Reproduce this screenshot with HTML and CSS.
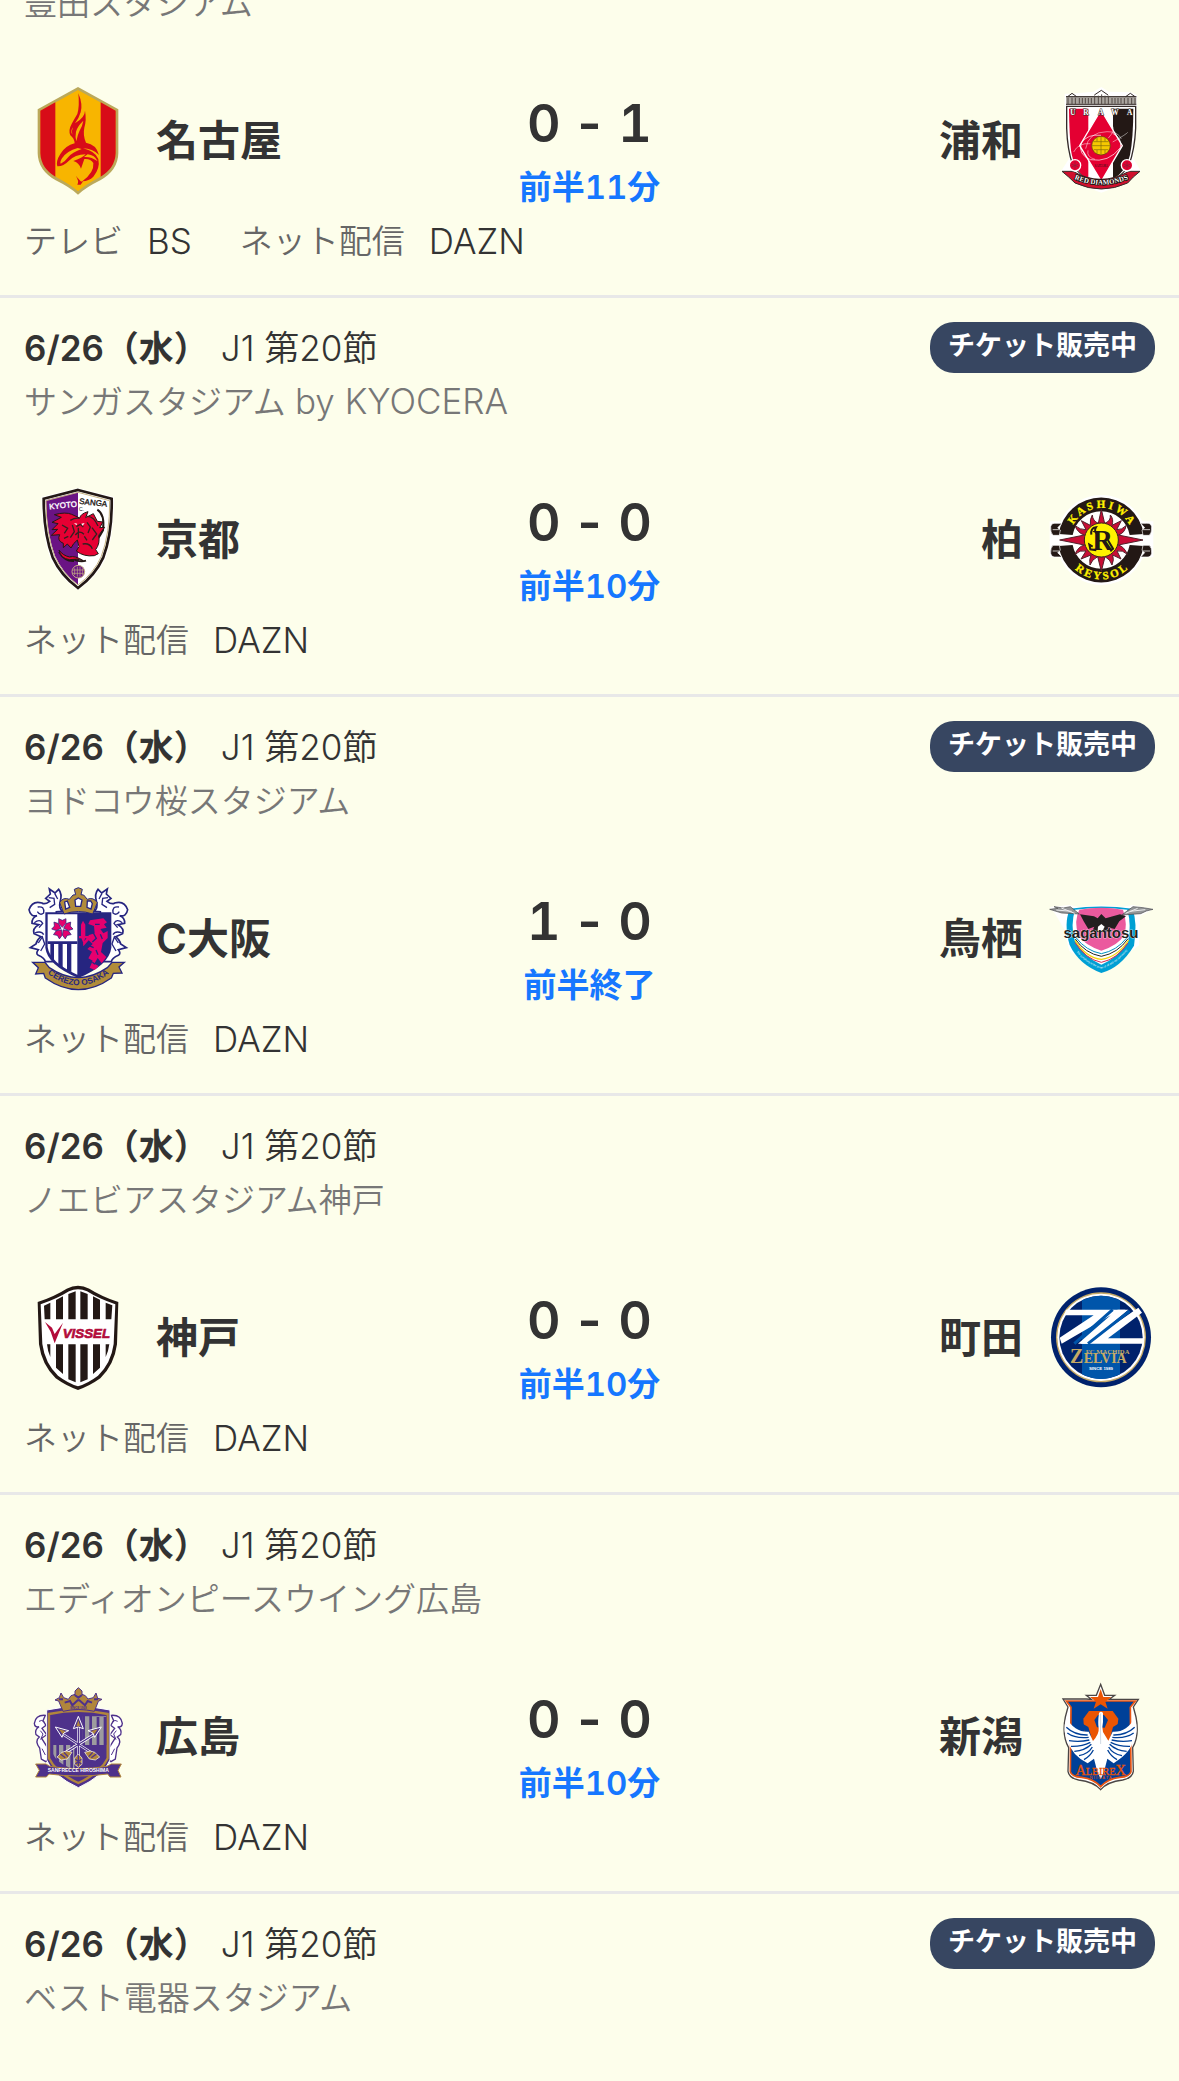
FILE: index.html
```html
<!DOCTYPE html>
<html lang="ja">
<head>
<meta charset="utf-8">
<meta name="viewport" content="width=device-width, initial-scale=1">
<title>J1 第20節</title>
<link rel="stylesheet" href="styles.css">
</head>
<body>
<main class="matches">

<article class="match match--scrolled">
  <p class="venue">豊田スタジアム</p>
  <div class="board">
    <svg class="crest" viewBox="27 33 324 324" aria-hidden="true">
      <path d="M189 36L310 103V235Q309 286 256 316Q215 336 189 359Q163 336 122 316Q69 286 68 235V103Z" fill="#bba95b"/>
      <path d="M189 45L302 107V235Q300 280 251 308Q211 329 189 349Q167 329 127 308Q78 280 76 235V107Z" fill="#f8b500"/>
      <path d="M121 82V305Q78 280 76 235V107ZM257 82V305Q300 280 302 235V107Z" fill="#d80c18"/>
      <path d="M190 55Q204 88 197 112Q191 132 180 145Q210 127 210 107Q215 135 208 158Q203 180 213 203Q244 208 252 240Q232 220 204 220Q240 228 250 252Q256 280 235 305Q222 318 202 319Q238 292 235 264Q226 250 208 252L198 281Q192 263 175 258Q205 247 212 238Q180 238 160 259Q145 275 127 274Q122 259 136 237Q151 212 179 205Q178 190 166 181Q159 166 171 145Q178 132 187 117Q194 93 190 55ZM182 302L197 319Q203 321 207 315L197 329H187Q193 317 182 302Z" fill="#d80c18"/>
      <path d="M205 137Q187 154 183 170Q180 184 184 199Q188 179 193 169Q202 155 205 137ZM188 219Q155 228 141 250Q134 262 137 266Q150 260 158 248Q172 231 200 222ZM218 238Q239 240 248 259Q228 244 207 246ZM174 157Q165 169 172 179Q169 166 174 157Z" fill="#f8b500"/>
    </svg>
    <p class="team">名古屋</p>
    <div class="result"><p class="score"><span>0</span><span>-</span><span>1</span></p><p class="status">前半11分</p></div>
    <p class="team team--away">浦和</p>
    <svg class="crest" viewBox="21 33 324 324" aria-hidden="true">
      <path d="M74 56H92L160 50L184 36L207 50L274 52L291 60V92L288 175L280 250L302 287L260 325L184 353L109 325L64 287L88 250L80 190L74 92Z" fill="#fff"/>
      <path d="M78 63H289V88H78Z" fill="#aaa59f"/>
      <path d="M78 65H289M78 88H289M163 60L184 46L204 60M83 65L96 55L110 65M257 65L271 55L285 65" fill="none" stroke="#342b28" stroke-width="3"/>
      <path d="M84 68V88M96 68V88M106 68V88M118 69V86M127 69V86M136 69V86M145 69V86M154 69V86M164 62V88M175 62V88M185 58V88M195 62V88M205 62V88M216 69V86M225 69V86M234 69V86M243 69V86M253 69V88M264 69V88M275 69V88M285 69V88" stroke="#514844" stroke-width="3"/>
      <path d="M80 94H287V160Q284 224 267 270Q247 306 184 340Q121 306 98 270Q82 224 80 160Z" fill="#fff" stroke="#342b28" stroke-width="4"/>
      <path d="M87 101H145V316Q102 288 93 226Q88 180 87 101Z" fill="#e40032"/>
      <path d="M219 101H280Q280 187 270 240Q260 289 219 312Z" fill="#231815"/>
      <path d="M183 105L247 212L184 319L119 212Z" fill="#e40032" stroke="#fff" stroke-width="4"/>
      <g fill="none" stroke="#fff" stroke-width="2"><path d="M183 181Q143 176 124 204Q113 238 151 254Q206 264 241 218Q247 188 218 175"/><path d="M205 189Q227 165 218 154M151 206Q115 203 101 231M144 226Q139 246 165 253M218 201Q262 176 263 172M137 221Q145 171 201 170Q234 169 244 192" opacity=".7"/></g>
      <circle cx="183" cy="212" r="28" fill="#f5c900" stroke="#58430c" stroke-width="2"/>
      <path d="M160 200H206M156 212H210M161 224H205M171 187V199M183 185V239M195 187V199M171 225V237M195 225V237" fill="none" stroke="#7d670b" stroke-width="2"/>
      <g class="crest-serif" font-size="22" font-weight="700" fill="#fff" stroke="#342b28" stroke-width="3" paint-order="stroke"><text x="91" y="119">U</text><text x="130" y="119">R</text><text x="175" y="119">A</text><text x="214" y="119">W</text><text x="261" y="119">A</text></g>
      <text class="crest-serif" x="184" y="276" font-size="9" fill="#231815" text-anchor="middle">SAITAMA</text>
      <path d="M66 289H99Q182 337 267 289H300L280 306L263 324Q184 360 105 324L86 306Z" fill="#d0102d" stroke="#342b28" stroke-width="3"/>
      <circle cx="105" cy="271" r="17" fill="#e40032" stroke="#fff" stroke-width="4"/><circle cx="261" cy="271" r="17" fill="#e40032" stroke="#fff" stroke-width="4"/>
      <path d="M105 259V282M94 267L116 276M94 276L116 267M261 259V282M250 267L272 276M250 276L272 267" stroke="#84233b" stroke-width="2"/>
      <path id="red-ribbon" d="M103 312Q184 346 265 312" fill="none"/>
      <text class="crest-serif" font-size="21" font-weight="700" fill="#fff" stroke="#231815" stroke-width="5" paint-order="stroke" text-anchor="middle"><textPath href="#red-ribbon" startOffset="50%">RED DIAMONDS</textPath></text>
    </svg>
  </div>
  <dl class="media"><div><dt>テレビ</dt><dd>BS</dd></div><div><dt>ネット配信</dt><dd>DAZN</dd></div></dl>
</article>

<article class="match">
  <header class="info"><p class="date"><b>6/26（水）</b><span>J1 第20節</span></p><span class="ticket">チケット販売中</span></header>
  <p class="venue">サンガスタジアム <span class="venue-latin">by KYOCERA</span></p>
  <div class="board">
    <svg class="crest" viewBox="27 30 324 324" aria-hidden="true">
      <path d="M189 39L297 66Q298 179 271 253Q244 309 189 346Q134 309 107 253Q80 179 79 66Z" fill="#fff"/>
      <path d="M189 45L290 71Q292 174 265 247Q241 300 189 339Q137 300 113 247Q86 174 86 71Z" fill="#fff" stroke="#231815" stroke-width="8"/>
      <path d="M189 52V330Q143 294 120 243Q95 175 92 76Z" fill="#6a1384"/>
      <path d="M189 52L284 77Q285 174 259 244Q237 294 189 330Q141 294 119 244Q93 174 93 77Z" fill="none" stroke="#c6b283" stroke-width="3"/>
      <path d="M247 104Q270 118 264 166Q247 198 237 202M177 258Q150 260 132 231M165 246Q191 264 213 257" fill="none" stroke="#231815" stroke-width="6"/>
      <path d="M194 129L170 118Q152 110 118 119L139 127L111 142L129 146L111 164L128 163L109 181L134 179Q125 197 145 205L145 218L157 207L168 219L176 206L187 195L192 215L184 228Q206 246 238 242L250 236L242 224Q256 205 251 181L269 157L254 158L264 141L247 139L235 116L212 128L219 110Q197 116 194 129ZM132 225Q137 251 164 254Q187 249 205 257Q180 241 164 246Q144 242 132 225Z" fill="#e60033" stroke="#231815" stroke-width="3"/>
      <path d="M194 130Q179 128 166 136M215 124Q236 122 249 153M141 150L158 160L148 175M216 142L226 156L219 174M184 155L196 148L205 156M181 180Q193 164 207 178M231 158L245 177L232 195M147 190L160 184M203 207Q224 203 232 221M172 150L178 170L166 188M190 158V190M208 184L216 196" fill="none" stroke="#342020" stroke-width="4"/>
      <path d="M177 144L187 146L184 151ZM209 144L199 146L203 152Z" fill="#fff"/>
      <circle cx="190" cy="290" r="19" fill="#6a1384" stroke="#c6b283" stroke-width="3"/><path d="M179 280V300M187 275V305M195 275V305M203 280V300M174 285H206M174 295H206" stroke="#c6b283" stroke-width="2"/>
      <g class="crest-sans" font-size="24" stroke-width="1"><text x="102" y="99" fill="#fff" stroke="#fff" transform="rotate(-6 145 90)">KYOTO</text><text x="192" y="91" fill="#231815" stroke="#231815" transform="rotate(6 234 90)">SANGA</text></g><text class="crest-sans" x="192" y="107" font-size="15" fill="#231815">C.</text>
    </svg>
    <p class="team">京都</p>
    <div class="result"><p class="score"><span>0</span><span>-</span><span>0</span></p><p class="status">前半10分</p></div>
    <p class="team team--away">柏</p>
    <svg class="crest" viewBox="21 30 324 324" aria-hidden="true">
      <circle cx="184" cy="195" r="135" fill="#fff"/><path d="M29 139H340V247H29Z" fill="#fff"/>
      <path d="M56 177A129 129 0 0 1 311 177L269 180A87 87 0 0 0 98 180ZM56 213A129 129 0 0 0 311 213L269 210A87 87 0 0 1 98 210Z" fill="#231815"/>
      <path d="M58 181H39Q31 174 32 155Q35 143 48 145H66L53 158L61 165ZM309 181H328Q336 174 335 155Q332 143 319 145H302L314 158L306 165ZM58 211H39Q31 218 32 235Q35 248 48 246H66L53 233L61 226ZM309 211H328Q336 218 335 235Q332 248 319 246H302L314 233L306 226Z" fill="#231815" stroke="#fff" stroke-width="2"/>
      <path d="M38 164H58M309 164H330M38 228H58M309 228H330" stroke="#c4c0bc" stroke-width="3"/>
      <path d="M184 103L194 145Q213 138 211 120Q222 132 216 151L244 137L230 164Q246 165 258 152Q255 174 235 180L309 195L235 210Q253 215 262 238Q248 224 231 228L243 252L218 240Q223 254 216 270Q211 253 195 245L184 289L173 245Q156 253 150 270Q147 253 153 240L123 252L138 228Q120 224 105 238Q114 215 133 210L59 195L133 180Q113 174 105 152Q121 165 138 164L124 137L151 151Q149 132 157 120Q158 138 175 145Z" fill="#c80d35" stroke="#51202a" stroke-width="3"/>
      <circle cx="184" cy="195" r="51" fill="#fff100" stroke="#38201d" stroke-width="3"/>
      <text class="crest-serif" x="188" y="225" font-size="86" font-weight="700" fill="#231815" text-anchor="middle">R</text>
      <path d="M154 179Q151 159 168 157Q160 170 174 178M158 215L148 209L151 223L169 226M204 196L219 221L211 229" fill="none" stroke="#231815" stroke-width="6"/>
      <path id="kashiwa" d="M88 195A96 96 0 0 1 280 195" fill="none"/><path id="reysol" d="M66 195A118 118 0 0 0 302 195" fill="none"/>
      <g class="crest-serif" font-size="33" font-weight="700" fill="#fff100" stroke="#fff100" stroke-width="1" text-anchor="middle"><text><textPath href="#kashiwa" startOffset="50%">K A S H I W A</textPath></text><text><textPath href="#reysol" startOffset="50%">R E Y S O L</textPath></text></g>
    </svg>
  </div>
  <dl class="media"><div><dt>ネット配信</dt><dd>DAZN</dd></div></dl>
</article>

<article class="match">
  <header class="info"><p class="date"><b>6/26（水）</b><span>J1 第20節</span></p><span class="ticket">チケット販売中</span></header>
  <p class="venue">ヨドコウ桜スタジアム</p>
  <div class="board">
    <svg class="crest" viewBox="27 27 324 324" aria-hidden="true">
      <g id="cerezo-wing"><path d="M142 109Q131 98 135 82Q143 57 131 43L120 54L103 42L106 57L92 70L104 79Q89 90 81 84Q52 75 42 104Q46 126 66 122Q50 128 51 145L71 149Q51 161 57 176L78 185Q66 194 63 207L46 218L70 224Q61 235 70 241Q89 249 91 260L124 260V110Z" fill="#fff" stroke="#262580" stroke-width="5"/><path d="M68 96Q89 92 86 114Q76 123 67 110M101 68L117 70L119 88L104 98M58 143Q75 130 83 145L72 158M59 174Q79 166 86 179M70 204L82 186L89 207L77 228M119 55L128 72" fill="none" stroke="#262580" stroke-width="4"/></g>
      <use href="#cerezo-wing" transform="translate(380 0) scale(-1 1)"/>
      <path d="M91 112H289V218Q283 270 190 309Q97 270 91 218Z" fill="#262580"/>
      <path d="M98 118H187V299Q104 262 98 216Z" fill="#fff"/>
      <path d="M98 199H187V207H98ZM106 205H117V259L106 247ZM130 205H143V281L130 272ZM156 205H169V292L156 286Z" fill="#262580"/>
      <g fill="#e5006e" stroke="#262580" stroke-width="2"><path id="cerezo-petal" d="M142 157L131 145L131 131L142 136L153 131L153 145Z"/><use href="#cerezo-petal" transform="rotate(72 142 161)"/><use href="#cerezo-petal" transform="rotate(144 142 161)"/><use href="#cerezo-petal" transform="rotate(216 142 161)"/><use href="#cerezo-petal" transform="rotate(288 142 161)"/></g>
      <path d="M204 137L211 149V183H219V190H210L206 206L199 190H192V183H198V149ZM225 136L265 130L276 142L267 148L275 158L256 162L265 175L278 168V189L263 204L258 231L274 246L260 265L248 249L238 266L251 273L239 285L224 278L233 257L220 250L231 230L217 222L233 207L221 196L205 214L204 204L222 180L239 175L237 153L220 147Z" fill="#e5006e"/>
      <path d="M235 174L244 190L232 201M243 225L249 239M240 148H254M256 178L262 192M222 212L236 218M232 262L240 268" fill="none" stroke="#262580" stroke-width="4"/>
      <path d="M147 117L134 83Q144 65 163 73L174 60L182 59L178 43L190 38L202 43L198 59L206 60L217 73Q235 65 247 83L233 117Q190 102 147 117Z" fill="#b18c3a" stroke="#262580" stroke-width="3"/>
      <path d="M149 81L157 78L164 97L152 102ZM180 75L190 69L201 75L197 94L182 94ZM217 78L227 78L232 86L228 102L216 97Z" fill="#fff" stroke="#262580" stroke-width="4"/>
      <path d="M53 262H90L103 278Q190 338 277 278L291 262H328L312 276L321 294L295 295L289 309Q190 379 91 309L86 295L62 297L70 278Z" fill="#b18c3a" stroke="#262580" stroke-width="4"/>
      <path id="cerezo-ribbon" d="M94 292Q190 370 286 292" fill="none"/><text class="crest-sans" font-size="25" font-weight="700" fill="#262580" text-anchor="middle"><textPath href="#cerezo-ribbon" startOffset="50%">CEREZO OSAKA</textPath></text>
    </svg>
    <p class="team">C大阪</p>
    <div class="result"><p class="score"><span>1</span><span>-</span><span>0</span></p><p class="status">前半終了</p></div>
    <p class="team team--away">鳥栖</p>
    <svg class="crest" viewBox="21 27 324 324" aria-hidden="true">
      <path d="M29 96L89 90L116 96Q184 86 247 96L277 90L341 102L300 123L297 211L184 295L88 228L71 160L45 116Z" fill="#fff"/>
      <path d="M90 101Q184 88 277 101Q293 140 282 212Q242 278 184 294Q117 269 89 210Q70 145 90 101Z" fill="#009fd4"/>
      <path d="M105 104Q184 94 262 104Q275 150 264 201Q229 251 184 269Q133 248 104 196Q91 150 105 104Z" fill="#fff"/>
      <path d="M118 104Q184 92 249 104Q264 149 252 181Q235 211 184 227Q134 211 115 181Q101 137 118 104Z" fill="#eb5a9e"/>
      <path d="M109 189Q138 227 184 236Q230 227 260 189" fill="none" stroke="#0092bf" stroke-width="3"/><path d="M106 192Q135 235 184 244Q233 235 264 191" fill="none" stroke="#252523" stroke-width="3"/><path d="M105 196Q138 248 184 253Q232 247 266 195" fill="none" stroke="#f8d40b" stroke-width="4"/><path d="M105 203Q138 253 184 262Q232 252 264 204" fill="none" stroke="#d92953" stroke-width="3"/>
      <path d="M120 118L162 124L173 130L184 117L197 130L240 118L258 124L238 139L224 162L203 157L213 171H155L163 155L145 162L131 139Z" fill="#231f20"/>
      <path d="M29 103L54 100L42 95L70 99L91 95L118 117L65 114ZM339 103L309 98L279 95L245 120L302 116L319 108Z" fill="#949698" stroke="#4a4a4c" stroke-width="2"/><path d="M49 105L95 109M64 99L104 115M316 104L270 109M293 100L257 115" stroke="#ececed" stroke-width="3"/>
      <path d="M174 155L184 147L194 155L187 168H173Z" fill="#fff"/>
      <text class="crest-sans" x="183" y="188" font-size="45" font-weight="700" fill="#231f20" stroke="#fff" stroke-width="2" paint-order="stroke" text-anchor="middle">sagantosu</text>
      <path id="tosu-curve" d="M93 207Q125 262 184 281Q242 262 279 203" fill="none"/><text class="crest-sans" font-size="8" fill="#fff" text-anchor="middle"><textPath href="#tosu-curve" startOffset="50%">The symphony is the power of all and our community</textPath></text>
    </svg>
  </div>
  <dl class="media"><div><dt>ネット配信</dt><dd>DAZN</dd></div></dl>
</article>

<article class="match">
  <header class="info"><p class="date"><b>6/26（水）</b><span>J1 第20節</span></p></header>
  <p class="venue">ノエビアスタジアム神戸</p>
  <div class="board">
    <svg class="crest" viewBox="27 24 324 324" aria-hidden="true">
      <path d="M68 81Q119 64 155 41Q189 24 223 41Q259 64 310 81L306 208Q298 269 256 310Q224 333 189 345Q154 333 122 310Q80 269 72 208Z" fill="#231815"/>
      <path d="M77 88Q127 71 162 49Q189 37 216 49Q251 71 301 88L296 207Q288 265 249 302Q220 324 189 334Q158 324 129 302Q90 265 82 207Z" fill="#fff"/>
      <path d="M87 92L106 83V133H89ZM123 75L144 64V133H123ZM160 57L182 49V133H160ZM196 49L218 57V133H196ZM234 64L255 74V133H234ZM272 83L292 91L289 133H272ZM96 208H106V246Q98 229 96 208ZM123 208H144V297L123 278ZM160 208H182V322L160 313ZM196 208H218V313L196 322ZM234 208H255V278L234 297ZM272 208H283Q280 231 272 246Z" fill="#231815"/>
      <path d="M90 141L111 158L119 177L144 143L119 205L107 170Z" fill="#b30c3b"/>
      <text class="crest-sans" x="143" y="189" font-size="40" font-weight="700" font-style="italic" fill="#b30c3b" stroke="#b30c3b" stroke-width="2">VISSEL</text>
    </svg>
    <p class="team">神戸</p>
    <div class="result"><p class="score"><span>0</span><span>-</span><span>0</span></p><p class="status">前半10分</p></div>
    <p class="team team--away">町田</p>
    <svg class="crest" viewBox="21 24 324 324" aria-hidden="true">
      <circle cx="183" cy="187" r="150" fill="#00226c"/><circle cx="183" cy="187" r="135" fill="#c6aa66"/><circle cx="183" cy="187" r="131" fill="#fff"/><circle cx="183" cy="187" r="125" fill="#00226c"/>
      <path d="M126 76Q183 48 240 76V298Q183 326 126 298Z" fill="#0055aa"/>
      <path d="M78 104H265L164 189L295 98L306 113L204 190H310V206H114L212 121L65 206L59 188L161 121H72Z" fill="#fff"/>
      <path d="M233 104L121 206H143L256 104Z" fill="#fff"/><path d="M218 104L103 206M269 108L144 206" stroke="#0055aa" stroke-width="9"/>
      <g class="crest-serif" font-weight="700" fill="#c6aa66"><text x="137" y="237" font-size="20">FC MACHIDA</text><text x="90" y="265" font-size="60">Z</text><text x="131" y="265" font-size="42">ELVIA</text></g>
      <text class="crest-sans" x="183" y="284" font-size="13" font-weight="700" fill="#fff" text-anchor="middle">SINCE 1989</text>
    </svg>
  </div>
  <dl class="media"><div><dt>ネット配信</dt><dd>DAZN</dd></div></dl>
</article>

<article class="match">
  <header class="info"><p class="date"><b>6/26（水）</b><span>J1 第20節</span></p></header>
  <p class="venue">エディオンピースウイング広島</p>
  <div class="board">
    <svg class="crest" viewBox="27 21 324 324" aria-hidden="true">
      <g id="hiroshima-leaf"><path d="M91 121Q62 119 58 145Q59 158 72 155Q58 165 63 179L73 186Q58 198 74 219L79 252L92 260L103 249L97 217L80 190L95 179L81 160L93 151L84 137Z" fill="#fff" stroke="#4e318b" stroke-width="4"/><path d="M72 139Q80 132 89 142M76 167L84 177L77 194M81 221L91 240" fill="none" stroke="#4e318b" stroke-width="3"/></g><use href="#hiroshima-leaf" transform="translate(380 0) scale(-1 1)"/>
      <path d="M95 105Q190 84 285 105V255Q267 302 190 338Q113 302 95 255Z" fill="#4e318b" stroke="#fff" stroke-width="3"/>
      <path d="M102 117Q190 98 278 117V250Q257 294 190 324Q123 294 102 250Z" fill="none" stroke="#b1863c" stroke-width="7"/>
      <path d="M203 124H273V210H203ZM115 210H178V285Q122 262 115 237Z" fill="#9d9b9f"/><path d="M206 123V210M227 123V210M249 126V210M270 126V210M128 210V263M149 210V279M170 210V287" stroke="#4e318b" stroke-width="8"/>
      <path d="M144 109L131 78L120 75L133 68L138 54L146 68L160 73L168 62L180 58V48L190 38L201 48V58L211 62L219 72L235 68L243 54L248 70L261 73L250 79L238 109Q190 98 144 109Z" fill="#b1863c" stroke="#4e318b" stroke-width="3"/>
      <path d="M149 83L165 78L172 91L188 76L193 76L210 91L218 78L231 83M179 60L190 68L201 60M132 73H144M237 73H249" fill="none" stroke="#4e318b" stroke-width="6"/>
      <text class="crest-sans" x="190" y="103" font-size="9" font-weight="700" fill="#4e318b" text-anchor="middle">SINCE 1938</text>
      <g fill="none" stroke="#fff" stroke-width="8"><path d="M190 266V154M140 240L244 174M240 240L138 174"/></g><g fill="none" stroke="#4e318b" stroke-width="4"><path d="M190 266V154M140 240L244 174M240 240L138 174"/></g>
      <path d="M190 124L205 161L190 156L175 161ZM121 156L161 167L146 174L141 187ZM259 156L219 167L234 174L239 187Z" fill="#4e318b" stroke="#fff" stroke-width="3"/>
      <path d="M190 136L196 154H184ZM132 163L151 168L142 177ZM248 163L229 168L238 177Z" fill="#b1863c"/>
      <path d="M190 237L201 249V268L190 277L179 268V249ZM154 228L171 232L157 252L139 255L126 246L141 232ZM226 228L209 232L223 252L241 255L254 246L239 232Z" fill="#b1863c" stroke="#fff" stroke-width="2"/><path d="M190 239V274M181 253L199 267M181 267L199 253M136 237L151 248M147 232L159 245M244 237L229 248M233 232L221 245" stroke="#4e318b" stroke-width="4"/>
      <path d="M62 267H93L104 274Q190 288 276 274L289 267H319L309 286L318 306H285L278 297Q190 309 102 297L94 306H62L73 286Z" fill="#4e318b" stroke="#b1863c" stroke-width="3"/>
      <text class="crest-sans" x="190" y="291" font-size="15" font-weight="700" fill="#fff" text-anchor="middle">SANFRECCE HIROSHIMA</text>
    </svg>
    <p class="team">広島</p>
    <div class="result"><p class="score"><span>0</span><span>-</span><span>0</span></p><p class="status">前半10分</p></div>
    <p class="team team--away">新潟</p>
    <svg class="crest" viewBox="21 21 324 324" aria-hidden="true">
      <path d="M69 72H139L154 73L139 61H169L182 28L194 61H224L208 73H295L280 96L288 126Q299 181 278 218L280 289Q277 309 248 315Q202 320 182 344Q161 320 116 315Q87 309 84 289L86 218Q65 181 76 126L84 96Z" fill="#fff" stroke="#4b4645" stroke-width="4"/>
      <path d="M79 78H286L271 97L273 290Q269 305 239 307Q203 311 182 335Q161 311 125 307Q95 305 91 290L93 97Z" fill="#004098" stroke="#e95513" stroke-width="5"/>
      <path d="M182 42L190 66H214L196 80L203 101L182 88L161 101L168 80L150 66H174Z" fill="#ea5504"/>
      <path d="M147 108H218L235 131L230 172L212 199H152L133 174L130 131Z" fill="#ea5504"/>
      <path d="M163 135L174 120H192L204 135L194 158L171 157ZM128 146L145 156L154 187L134 172ZM235 146L219 156L211 187L231 172Z" fill="#004098"/>
      <path d="M177 114Q183 106 189 114V141Q185 157 189 171Q195 181 205 197L218 170Q261 172 284 128Q298 172 279 199Q272 226 244 248L221 265L202 251L192 290L182 312L172 290L162 251L143 265Q95 240 85 200Q65 170 79 128Q104 172 146 170L159 198Q178 177 176 160Q173 143 177 114Z" fill="#fff"/>
      <g id="swan-feathers" fill="none" stroke="#004098" stroke-width="4"><path d="M79 157Q104 181 143 180M82 174Q105 191 146 187M87 197Q119 202 148 195M93 214Q126 215 151 202M103 229Q135 227 154 208M117 242Q145 237 157 216M132 254Q151 243 160 225"/></g><use href="#swan-feathers" transform="translate(363 0) scale(-1 1)"/>
      <path d="M181 116L182 207" stroke="#b8c5d5" stroke-width="2"/>
      <text class="crest-serif" x="182" y="301" font-size="43" fill="#ea5504" stroke="#ea5504" stroke-width="1" text-anchor="middle"><tspan>A</tspan><tspan font-size="31">LBIRE</tspan><tspan>X</tspan></text>
      <text class="crest-sans" x="182" y="312" font-size="12" fill="#ea5504" text-anchor="middle">N I I G A T A</text>
    </svg>
  </div>
  <dl class="media"><div><dt>ネット配信</dt><dd>DAZN</dd></div></dl>
</article>

<article class="match match--last">
  <header class="info"><p class="date"><b>6/26（水）</b><span>J1 第20節</span></p><span class="ticket">チケット販売中</span></header>
  <p class="venue">ベスト電器スタジアム</p>
</article>

</main>
</body>
</html>
```
FILE: styles.css
```css
* {
  box-sizing: border-box;
}

body,
p,
dl,
dd {
  margin: 0;
}

body {
  overflow-x: hidden;
  background: #fdfeeb;
  color: #333;
  font-family: Inter, "Noto Sans CJK JP", sans-serif;
  font-size: 33px;
  font-weight: 350;
}

.matches {
  margin-top: -24px;
}

.match {
  padding: 24px 24px 30px;
  border-bottom: 3px solid #e8e8e8;
}

.match--scrolled {
  padding-top: 0;
}

.match--last {
  padding-bottom: 56px;
  border-bottom: 0;
}

.info {
  display: flex;
  justify-content: space-between;
  align-items: center;
  height: 51px;
}

.date {
  display: flex;
  align-items: center;
  gap: 12px;
  padding-top: 2px;
  font-size: 35px;
  line-height: 51px;
}

.date b {
  font-weight: 600;
}

.ticket {
  height: 51px;
  padding: 0 18px;
  border-radius: 24px;
  background: #374661;
  color: #fff;
  font-size: 27px;
  font-weight: 600;
  line-height: 48px;
}

.venue {
  margin-top: 2px;
  color: #777;
  line-height: 54px;
}

.venue-latin {
  font-size: 35px;
  line-height: 48px;
}

.match--scrolled .venue {
  margin-top: 0;
}

.board {
  display: grid;
  grid-template-columns: 108px 1fr auto 1fr 108px;
  column-gap: 24px;
  align-items: start;
  margin-top: 56px;
}

.crest {
  width: 108px;
  height: 108px;
  overflow: visible;
}

.crest-serif {
  font-family: "Liberation Serif", serif;
}

.crest-sans {
  font-family: "Liberation Sans", sans-serif;
}

.team {
  font-size: 42px;
  font-weight: 600;
  line-height: 110px;
}

.team--away {
  text-align: right;
}

.result {
  padding-top: 6px;
  text-align: center;
}

.score {
  display: flex;
  justify-content: center;
  gap: 12px;
  font-size: 52px;
  font-weight: 600;
  font-feature-settings: "tnum";
  line-height: 64px;
}

.status {
  margin-top: 7px;
  color: #1677ff;
  font-weight: 600;
  font-feature-settings: "tnum";
  line-height: 48px;
}

.media {
  display: flex;
  gap: 48px;
  margin-top: 6px;
  line-height: 48px;
}

.media div {
  display: flex;
  gap: 24px;
}

.media dt {
  color: #666;
}

.media dd {
  font-size: 35px;
}
```
